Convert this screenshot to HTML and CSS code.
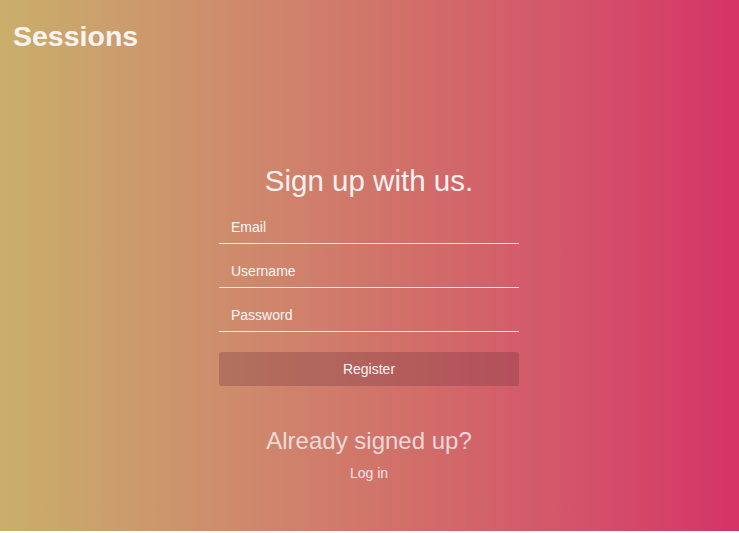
FILE: index.html
```html
<!DOCTYPE html>
<html>
<head>
<meta charset="utf-8">
<link rel="stylesheet" href="styles.css">
</head>
<body>
<div class="page">
  <header class="topbar">
    <h1 class="brand">Sessions</h1>
  </header>
  <main class="signup">
    <h2 class="title">Sign up with us.</h2>
    <form class="form">
      <input class="field" type="text" placeholder="Email">
      <input class="field" type="text" placeholder="Username">
      <input class="field" type="password" placeholder="Password">
      <button class="btn" type="button">Register</button>
    </form>
    <p class="already">Already signed up?</p>
    <a class="login" href="#">Log in</a>
  </main>
</div>
</body>
</html>
```
FILE: styles.css
```css
html, body {
  margin: 0;
  padding: 0;
  background: #ffffff;
}
body {
  font-family: "Liberation Sans", Arial, sans-serif;
}
.page {
  height: 531px;
  background: linear-gradient(to right, #c9af6b 0%, #ce8d6c 30%, #d16f69 55%, #d4536a 78%, #d53366 100%);
  display: flex;
  flex-direction: column;
}
.topbar {
  padding: 20px 13px 0;
}
.brand {
  margin: 0;
  font-size: 28.5px;
  line-height: 32px;
  font-weight: bold;
  color: #f7f3f2;
}
.signup {
  width: 300px;
  margin: 113px 0 0 calc(50% - 150.5px);
  display: flex;
  flex-direction: column;
  align-items: stretch;
}
.title {
  margin: 0;
  font-size: 29.5px;
  line-height: 32px;
  font-weight: normal;
  color: #f8f1f2;
  text-align: center;
  white-space: nowrap;
}
.form {
  display: flex;
  flex-direction: column;
  margin: 3px 0 0;
}
.field {
  box-sizing: border-box;
  height: 44px;
  margin: 0;
  padding: 11px 12px 0;
  border: 0;
  border-bottom: 1px solid #f4eaea;
  background: transparent;
  font-family: "Liberation Sans", Arial, sans-serif;
  font-size: 14px;
  color: #ffffff;
  outline: none;
}
.field::placeholder {
  color: #fbf6f6;
  opacity: 1;
}
.btn {
  margin-top: 20px;
  height: 34px;
  border: 0;
  border-radius: 3px;
  background: rgba(110, 50, 60, 0.3);
  color: #fbf3f3;
  font-family: "Liberation Sans", Arial, sans-serif;
  font-size: 14px;
  cursor: pointer;
}
.already {
  margin: 41px 0 0;
  font-size: 24px;
  line-height: 28px;
  color: rgba(236, 230, 232, 0.9);
  text-align: center;
}
.login {
  margin-top: 9px;
  font-size: 14px;
  line-height: 18px;
  color: #f1e4e4;
  text-align: center;
  text-decoration: none;
}
```
